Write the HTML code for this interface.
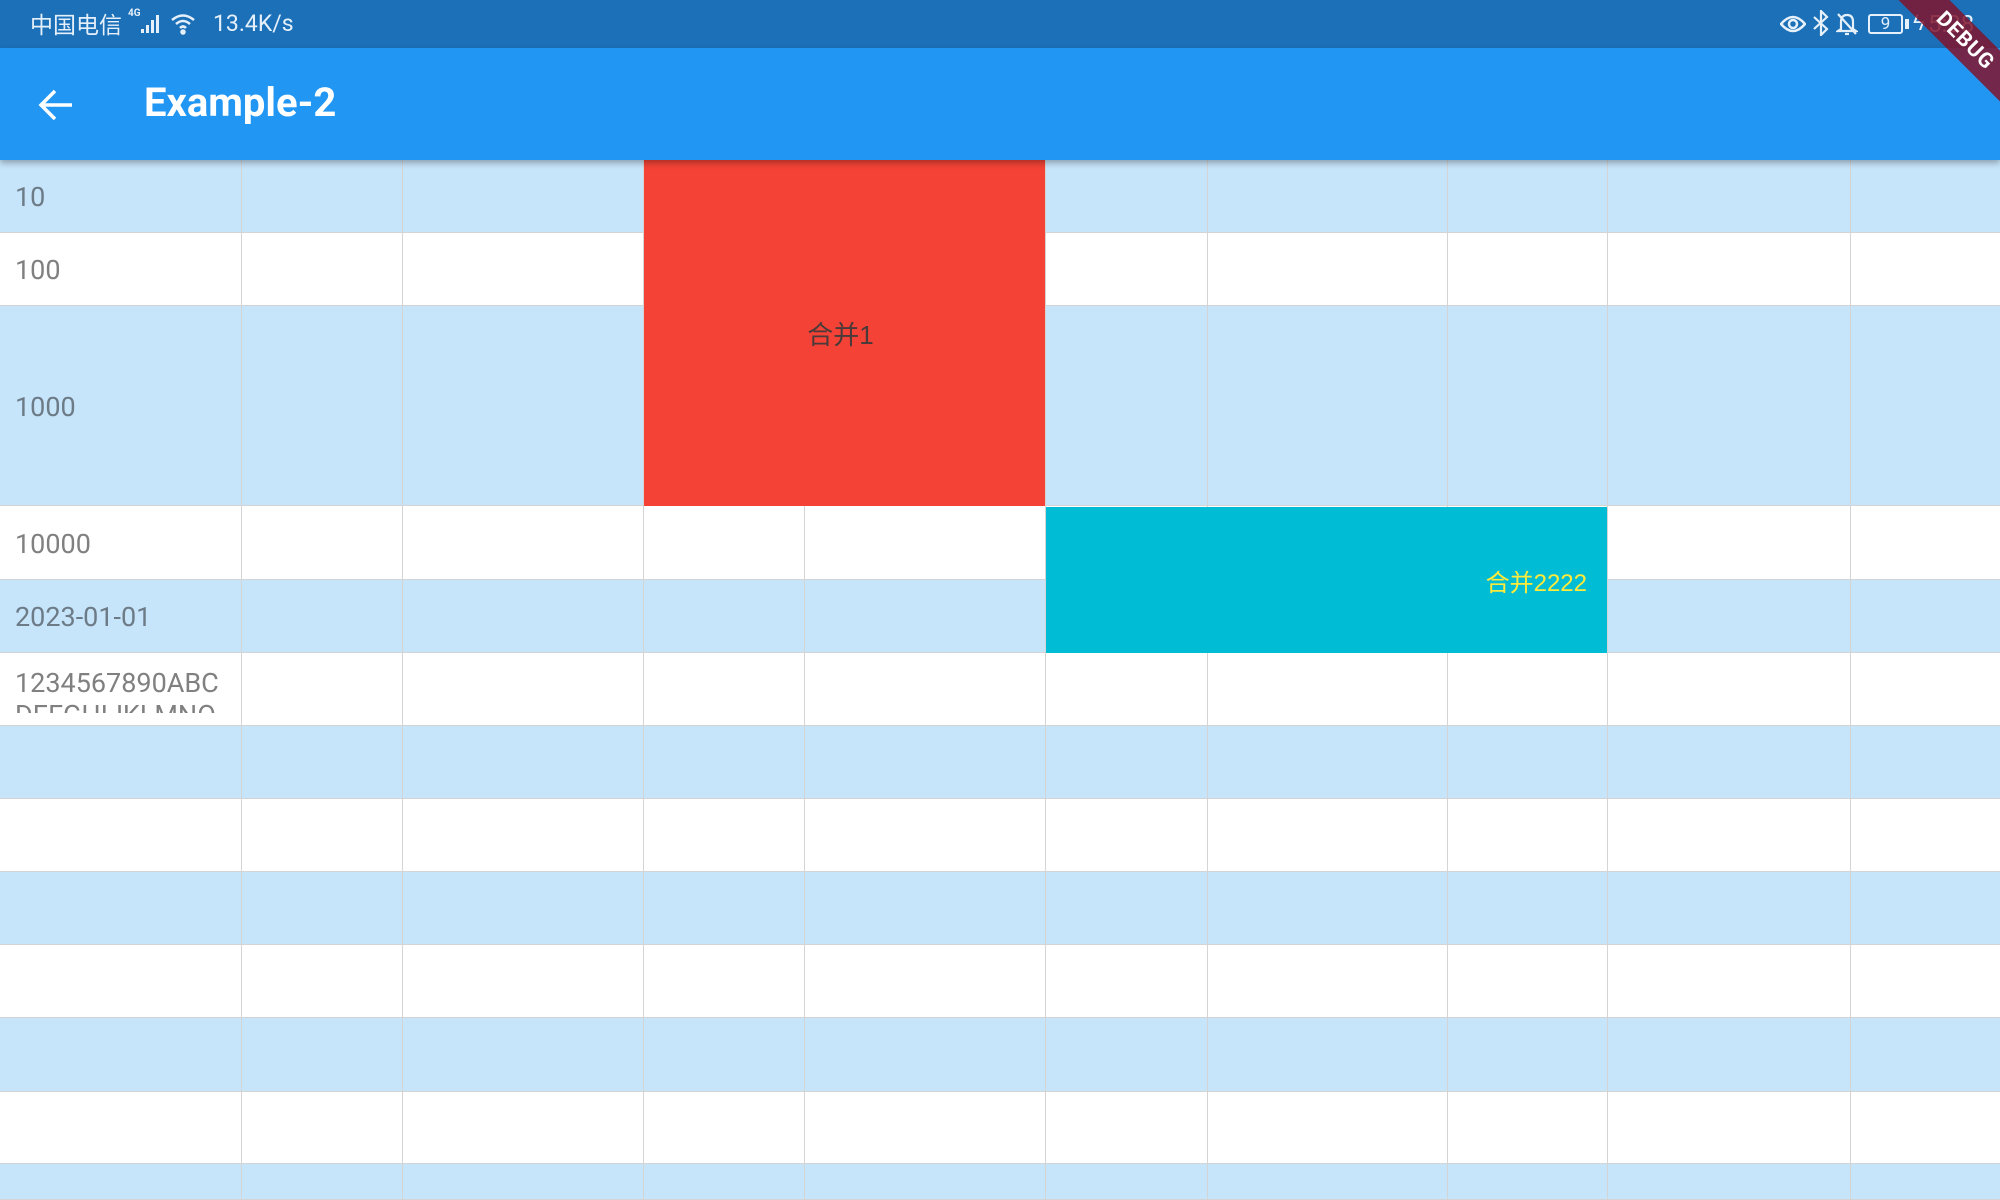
<!DOCTYPE html>
<html><head><meta charset="utf-8"><style>
*{margin:0;padding:0;box-sizing:border-box}
body{width:2000px;height:1200px;overflow:hidden;position:relative;background:#fff;font-family:"Roboto","Liberation Sans","Noto Sans CJK SC",sans-serif}
.sb{position:absolute;left:0;top:0;width:2000px;height:48px;background:#1b70b8;color:#e6f0fa;font-size:23px}
.ab{position:absolute;left:0;top:48px;width:2000px;height:112px;background:#2196f3;box-shadow:0 3px 6px rgba(0,0,0,.3);z-index:5}
.row{position:absolute;left:0;width:2000px;border-bottom:1px solid #d4d4d4}
.b{background:#c6e4fa}
.vl{position:absolute;top:160px;bottom:0;width:1px;background:#d4d4d4}
.t{position:absolute;left:15px;font-size:27px;color:#808080}
.b .t{color:#6d7b87}
</style></head><body>
<div class="sb">
<span style="position:absolute;left:30px;top:9px;font-family:'Noto Sans CJK SC',sans-serif;font-size:23px;line-height:28px">中国电信</span>
<span style="position:absolute;left:128px;top:8px;font-size:10px;font-weight:bold">4G</span>
<svg style="position:absolute;left:141px;top:14px" width="24" height="20"><rect x="0" y="15" width="3" height="4" fill="#e6f0fa"/><rect x="5" y="11" width="3" height="8" fill="#e6f0fa"/><rect x="10" y="6" width="3" height="13" fill="#e6f0fa"/><rect x="15" y="1" width="3" height="18" fill="#e6f0fa"/></svg>
<svg style="position:absolute;left:170px;top:12px" width="28" height="24" fill="none" stroke="#e6f0fa" stroke-width="2.5"><path d="M2 8 Q13 -1 24 8"/><path d="M6 12 Q13 6 20 12"/><path d="M10 16 Q13 13 16 16"/><circle cx="13" cy="20" r="1.5" fill="#e6f0fa"/></svg>
<span style="position:absolute;left:213px;top:10px;line-height:28px">13.4K/s</span>
<svg style="position:absolute;left:1780px;top:14px" width="26" height="20" fill="none" stroke="#e6f0fa" stroke-width="2.5"><path d="M1 10 Q13 -4 25 10 Q13 24 1 10Z"/><circle cx="13" cy="10" r="4"/></svg>
<svg style="position:absolute;left:1812px;top:10px" width="18" height="26" fill="none" stroke="#e6f0fa" stroke-width="2.2"><path d="M2 7 L15 19 L9 25 L9 1 L15 7 L2 19"/></svg>
<svg style="position:absolute;left:1836px;top:12px" width="22" height="24" fill="none" stroke="#e6f0fa" stroke-width="2.2"><path d="M5 17 L5 10 Q5 3 11 3 Q17 3 17 10 L17 17 L20 19 L2 19Z"/><path d="M9 22 L13 22"/><path d="M2 2 L20 22"/></svg>
<div style="position:absolute;left:1868px;top:14px;width:35px;height:20px;border:2px solid #e6f0fa;border-radius:3px;font-size:17px;text-align:center;line-height:16px">9</div>
<div style="position:absolute;left:1905px;top:19px;width:4px;height:10px;background:#e6f0fa"></div>
<span style="position:absolute;left:1913px;top:10px;font-size:22px">ϟ</span>
<span style="position:absolute;left:1928px;top:10px;line-height:28px;font-size:24px">5:28</span>
</div>
<div class="ab">
<svg style="position:absolute;left:38px;top:40px" width="36" height="34" fill="none" stroke="#fff" stroke-width="3.5"><path d="M34 17 L4 17 M17 3 L3 17 L17 31"/></svg>
<span style="position:absolute;left:144px;top:32px;color:#fff;font-size:40px;font-weight:bold;line-height:46px">Example-2</span>
</div>
<div style="position:absolute;left:1845px;top:23px;width:240px;height:36px;background:rgba(128,20,45,.85);transform:rotate(45deg);transform-origin:center;z-index:10;color:#fff;font-size:21px;font-weight:bold;text-align:center;line-height:36px;letter-spacing:1px">DEBUG</div>

<div class="row b" style="top:160px;height:73px"><span class="t" style="top:21px">10</span></div>
<div class="row" style="top:233px;height:73px"><span class="t" style="top:21px">100</span></div>
<div class="row b" style="top:306px;height:200px"><span class="t" style="top:85px">1000</span></div>
<div class="row" style="top:506px;height:74px"><span class="t" style="top:22px">10000</span></div>
<div class="row b" style="top:580px;height:73px"><span class="t" style="top:21px">2023-01-01</span></div>
<div class="row" style="top:653px;height:73px"><div class="t" style="top:14px;height:46px;overflow:hidden;line-height:32px;width:215px">1234567890ABC DEFGHIJKLMNO</div></div>
<div class="row b" style="top:726px;height:73px"></div>
<div class="row" style="top:799px;height:73px"></div>
<div class="row b" style="top:872px;height:73px"></div>
<div class="row" style="top:945px;height:73px"></div>
<div class="row b" style="top:1018px;height:74px"></div>
<div class="row" style="top:1092px;height:72px"></div>
<div class="row b" style="top:1164px;height:36px"></div>

<div class="vl" style="left:241px"></div>
<div class="vl" style="left:402px"></div>
<div class="vl" style="left:643px"></div>
<div class="vl" style="left:804px"></div>
<div class="vl" style="left:1045px"></div>
<div class="vl" style="left:1207px"></div>
<div class="vl" style="left:1447px"></div>
<div class="vl" style="left:1607px"></div>
<div class="vl" style="left:1850px"></div>

<div style="position:absolute;left:644px;top:160px;width:401px;height:346px;background:#f44336;display:flex;align-items:center;justify-content:center;font-size:26px;color:#4a3a3a;font-family:'Liberation Sans','Noto Sans CJK SC',sans-serif;padding-right:8px">合并1</div>
<div style="position:absolute;left:1046px;top:507px;width:561px;height:146px;background:#00bcd4;display:flex;align-items:center;justify-content:flex-end;padding-right:20px;font-size:24px;color:#ffeb3b;font-family:'Liberation Sans','Noto Sans CJK SC',sans-serif">合并2222</div>
</body></html>
